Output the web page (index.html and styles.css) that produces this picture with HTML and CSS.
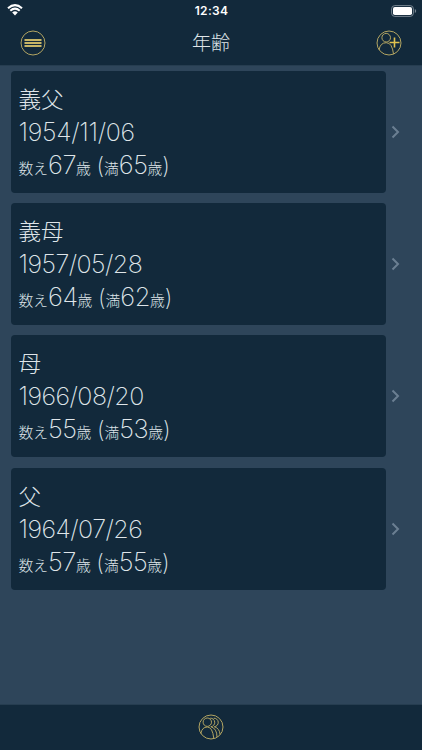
FILE: index.html
```html
<!DOCTYPE html>
<html lang="ja">
<head>
<meta charset="utf-8">
<title>年齢</title>
<link rel="stylesheet" href="styles.css">
</head>
<body>
<header class="top">
  <div class="status">
    <svg class="wifi" width="16" height="12" viewBox="0 0 16 12"><path d="M1 4.2Q8-1.9 15 4.2M3.3 6.7Q8 2.7 12.7 6.7" fill="none" stroke="#fff" stroke-width="2.1"/><path d="M5.2 8.4Q8 6.3 10.8 8.4L8 11.4Z" fill="#fff"/></svg>
    <span class="time">12:34</span>
    <svg class="battery" width="26" height="12" viewBox="0 0 26 12"><rect x=".6" y=".6" width="21.8" height="10.8" rx="3.2" fill="none" stroke="#778591"/><rect x="2" y="2" width="19" height="8" rx="1.8" fill="#fff"/><path d="M23.8 4v4q1.4-.6 1.4-2t-1.4-2" fill="#778591"/></svg>
  </div>
  <div class="nav">
    <svg class="icon" width="26" height="26" viewBox="0 0 26 26"><circle cx="13" cy="13" r="12"/><path class="bars" d="M4.5 10h17M4.5 13h17M4.5 16h17"/></svg>
    <h1>年齢</h1>
    <svg class="icon" width="26" height="26" viewBox="0 0 26 26"><circle cx="13" cy="13" r="12"/><circle cx="10.2" cy="7.7" r="4.3"/><path d="M3 20Q4.2 12.7 10.2 12.7T17.5 24"/><path class="plus" d="M13.5 12.5h10M18.5 7.5v10"/></svg>
  </div>
</header>
<main class="list">
  <section class="row">
    <div class="card"><div class="name">義父</div><div class="date ones">1954/11/06</div><div class="age"><small>数え</small>67<small>歳</small> <i>(</i><small>満</small>65<small>歳</small><i>)</i></div></div>
    <svg class="chevron" width="9" height="14" viewBox="0 0 9 14"><path d="M1.5 1.5 7 7l-5.5 5.5"/></svg>
  </section>
  <section class="row">
    <div class="card"><div class="name">義母</div><div class="date">1957/05/28</div><div class="age"><small>数え</small>64<small>歳</small> <i>(</i><small>満</small>62<small>歳</small><i>)</i></div></div>
    <svg class="chevron" width="9" height="14" viewBox="0 0 9 14"><path d="M1.5 1.5 7 7l-5.5 5.5"/></svg>
  </section>
  <section class="row">
    <div class="card"><div class="name">母</div><div class="date">1966/08/20</div><div class="age"><small>数え</small>55<small>歳</small> <i>(</i><small>満</small>53<small>歳</small><i>)</i></div></div>
    <svg class="chevron" width="9" height="14" viewBox="0 0 9 14"><path d="M1.5 1.5 7 7l-5.5 5.5"/></svg>
  </section>
  <section class="row">
    <div class="card"><div class="name">父</div><div class="date">1964/07/26</div><div class="age"><small>数え</small>57<small>歳</small> <i>(</i><small>満</small>55<small>歳</small><i>)</i></div></div>
    <svg class="chevron" width="9" height="14" viewBox="0 0 9 14"><path d="M1.5 1.5 7 7l-5.5 5.5"/></svg>
  </section>
</main>
<footer class="tabs">
  <svg class="icon" width="26" height="26" viewBox="0 0 26 26"><circle cx="13" cy="13" r="12"/><circle cx="9.3" cy="8.2" r="4.2"/><path d="M2.8 19.5Q4 13 9.3 13T15.8 24.5M12.2 4.2a4.2 4.2 0 0 1 .6 8.5Q19 14.5 19 23M15.7 4.2a4.2 4.2 0 0 1 .6 8.5Q21.8 14.5 22 20.5"/></svg>
</footer>
</body>
</html>
```
FILE: styles.css
```css
* { box-sizing: border-box; }
body {
  margin: 0;
  height: 750px;
  display: flex;
  flex-direction: column;
  background: #2e455a;
  color: #dfe5e9;
  font-family: Inter, "Noto Sans CJK JP", sans-serif;
  overflow: hidden;
}
.top { height: 66px; background: #12293b; border-bottom: 1px solid #263d50; }
.status {
  height: 22px;
  padding: 0 5px 0 7px;
  display: grid;
  grid-template-columns: 1fr auto 1fr;
  align-items: center;
}
.wifi { margin-top: -2px; }
.time { margin-left: -1px; color: #fff; font-size: 12px; font-weight: 600; line-height: 22px; letter-spacing: .3px; }
.battery { justify-self: end; margin-top: -1px; }
.nav { height: 42px; padding: 0 20px; display: flex; align-items: center; justify-content: space-between; }
h1 { margin: 0; padding-top: 1px; font-size: 19px; line-height: 42px; font-weight: 200; }
.icon { fill: none; stroke: #b3a562; stroke-width: 1; }
.bars { stroke: #c7b566; stroke-width: 1.8; }
.plus { stroke: #dfc24f; stroke-width: 1.6; }
.list { flex: 1; padding: 4.5px 0 0 10.5px; display: flex; flex-direction: column; gap: 10.4px; }
.row { display: flex; align-items: center; }
.card { width: 375.5px; height: 122px; padding: 12px 8px; border-radius: 4px; background: #12293b; font-weight: 200; white-space: nowrap; }
.name { font-size: 22.5px; line-height: 33px; height: 33px; }
.date { font-size: 25px; line-height: 33px; height: 33px; letter-spacing: -.55px; }
.ones { letter-spacing: -.3px; }
.age { font-size: 25.5px; line-height: 31px; height: 33px; letter-spacing: -.5px; word-spacing: -1.2px; }
.age small { font-size: 14.8px; letter-spacing: 0; }
.age i { font-style: normal; font-size: 23px; letter-spacing: 0; }
.chevron { margin-left: 5px; fill: none; stroke: #6b7f92; stroke-width: 2; }
.tabs { height: 46px; padding-bottom: 1px; border-top: 1px solid #263d50; background: #12293b; display: flex; justify-content: center; align-items: center; }
```
